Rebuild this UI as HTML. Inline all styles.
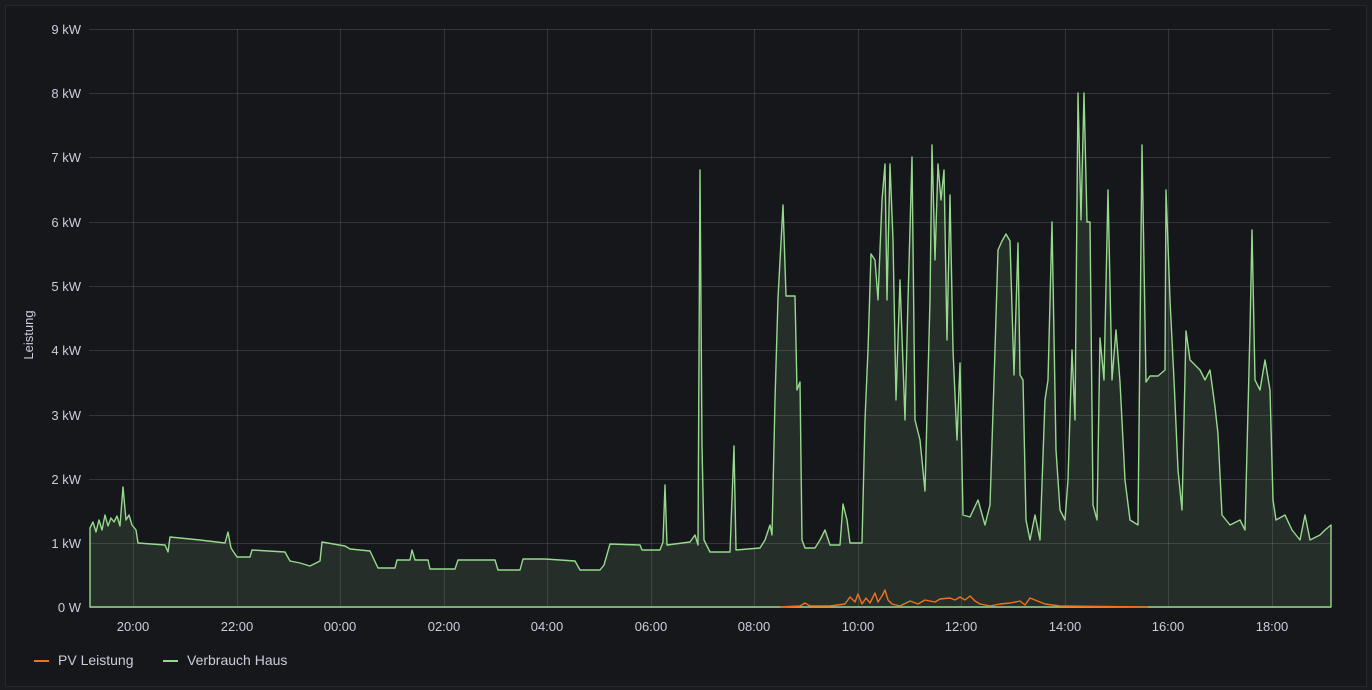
<!DOCTYPE html>
<html><head><meta charset="utf-8"><style>
html,body{margin:0;padding:0;background:#1a1b1f;}
body{width:1372px;height:690px;overflow:hidden;font-family:"Liberation Sans",sans-serif;}
.panel{position:absolute;left:5px;top:5px;width:1360px;height:680px;background:#16171b;border:1px solid #26282d;border-radius:2px;}
svg{position:absolute;left:0;top:0;}
text{font-family:"Liberation Sans",sans-serif;font-size:13px;fill:#ccccdc;}
</style></head><body>
<div class="panel"></div>
<svg width="1372" height="690" viewBox="0 0 1372 690">
<g stroke="rgba(204,204,220,0.16)" stroke-width="1">
<line x1="89" x2="1331" y1="29.5" y2="29.5"/><line x1="89" x2="1331" y1="93.5" y2="93.5"/>
<line x1="89" x2="1331" y1="157.5" y2="157.5"/><line x1="89" x2="1331" y1="222.5" y2="222.5"/>
<line x1="89" x2="1331" y1="286.5" y2="286.5"/><line x1="89" x2="1331" y1="350.5" y2="350.5"/>
<line x1="89" x2="1331" y1="415.5" y2="415.5"/><line x1="89" x2="1331" y1="479.5" y2="479.5"/>
<line x1="89" x2="1331" y1="543.5" y2="543.5"/><line x1="89" x2="1331" y1="607.5" y2="607.5"/>
<line y1="29" y2="607" x1="133.5" x2="133.5"/><line y1="29" y2="607" x1="237.5" x2="237.5"/>
<line y1="29" y2="607" x1="340.5" x2="340.5"/><line y1="29" y2="607" x1="444.5" x2="444.5"/>
<line y1="29" y2="607" x1="547.5" x2="547.5"/><line y1="29" y2="607" x1="651.5" x2="651.5"/>
<line y1="29" y2="607" x1="754.5" x2="754.5"/><line y1="29" y2="607" x1="858.5" x2="858.5"/>
<line y1="29" y2="607" x1="961.5" x2="961.5"/><line y1="29" y2="607" x1="1065.5" x2="1065.5"/>
<line y1="29" y2="607" x1="1168.5" x2="1168.5"/><line y1="29" y2="607" x1="1272.5" x2="1272.5"/>
</g>
<g text-anchor="end">
<text x="81" y="34">9 kW</text><text x="81" y="98">8 kW</text><text x="81" y="162">7 kW</text>
<text x="81" y="227">6 kW</text><text x="81" y="291">5 kW</text><text x="81" y="355">4 kW</text>
<text x="81" y="420">3 kW</text><text x="81" y="484">2 kW</text><text x="81" y="548">1 kW</text>
<text x="81" y="612">0 W</text>
</g>
<g text-anchor="middle">
<text x="133" y="631">20:00</text><text x="237" y="631">22:00</text><text x="340" y="631">00:00</text>
<text x="444" y="631">02:00</text><text x="547" y="631">04:00</text><text x="651" y="631">06:00</text>
<text x="754" y="631">08:00</text><text x="858" y="631">10:00</text><text x="961" y="631">12:00</text>
<text x="1065" y="631">14:00</text><text x="1168" y="631">16:00</text><text x="1272" y="631">18:00</text>
</g>
<text transform="translate(33,335) rotate(-90)" text-anchor="middle">Leistung</text>
<path id="g" fill="rgba(150,217,141,0.12)" stroke="#96d98d" stroke-width="1.4" stroke-linejoin="round" d="M90 528 L93 522 96 532 99 520 102 530 105 515 108 526 111 518 114 522 117 516 120 526 123 487 126 520 129 515 132 525 136 530 138 543 165 545 168 552 170 537 200 540 225 543 228 532 231 548 237 557 250 557 252 550 285 552 290 561 300 563 310 566 320 561 322 542 345 546 350 549 370 551 378 568 395 568 397 560 410 560 412 550 415 560 428 560 430 569 455 569 458 560 495 560 498 570 520 570 523 559 545 559 575 561 580 570 600 570 604 565 610 544 640 545 642 550 660 550 663 542 665 485 667 545 690 542 695 535 698 545 700 170 702 446 704 540 710 552 730 552 734 446 736 550 760 548 765 540 770 525 772 535 775 400 778 298 783 205 786 296 795 296 797 390 800 382 802 540 805 548 815 548 820 540 825 530 830 545 840 545 843 504 847 520 850 543 862 543 865 420 868 350 871 254 875 260 878 300 882 200 885 164 887 300 890 164 893 240 896 400 900 280 905 420 908 300 912 157 915 420 920 440 925 491 930 300 932 145 935 260 938 164 941 200 944 170 947 340 950 195 953 350 957 440 960 363 963 515 970 517 978 500 985 525 990 505 995 350 998 250 1002 241 1006 234 1010 241 1014 375 1018 243 1020 375 1023 380 1026 520 1030 540 1035 515 1040 540 1045 400 1048 380 1052 222 1056 450 1060 510 1065 520 1068 480 1072 350 1075 420 1078 93 1081 220 1084 93 1087 222 1090 222 1093 505 1097 520 1100 338 1104 380 1108 190 1112 380 1116 330 1120 382 1125 480 1130 520 1138 525 1142 145 1146 382 1150 376 1158 376 1165 370 1166 190 1170 300 1174 380 1178 470 1182 510 1186 331 1190 360 1195 365 1200 370 1205 380 1210 370 1215 407 1218 434 1222 515 1230 525 1240 520 1245 530 1250 330 1252 230 1255 380 1260 390 1265 360 1270 390 1273 500 1276 520 1285 515 1292 530 1300 540 1305 515 1310 540 1320 535 1325 530 1331 525 L1331 607 L90 607 Z"/>
<path fill="none" stroke="#f2711c" stroke-width="1.4" stroke-linejoin="round" d="M780 607 L800 606 805 603 810 606 830 606 845 604 850 597 855 602 858 594 862 604 866 598 870 603 875 593 878 602 882 596 885 590 888 600 892 604 900 606 910 601 918 604 925 600 935 602 940 599 950 598 955 600 960 597 965 600 970 596 975 601 980 604 990 606 1000 604 1010 603 1020 601 1025 605 1030 598 1035 600 1045 604 1060 606 1148 607"/>
<rect x="34" y="660" width="15" height="2" fill="#f2711c"/>
<text x="58" y="665" style="font-size:14px">PV Leistung</text>
<rect x="163" y="660" width="15" height="2" fill="#96d98d"/>
<text x="187" y="665" style="font-size:14px">Verbrauch Haus</text>
</svg>
</body></html>
